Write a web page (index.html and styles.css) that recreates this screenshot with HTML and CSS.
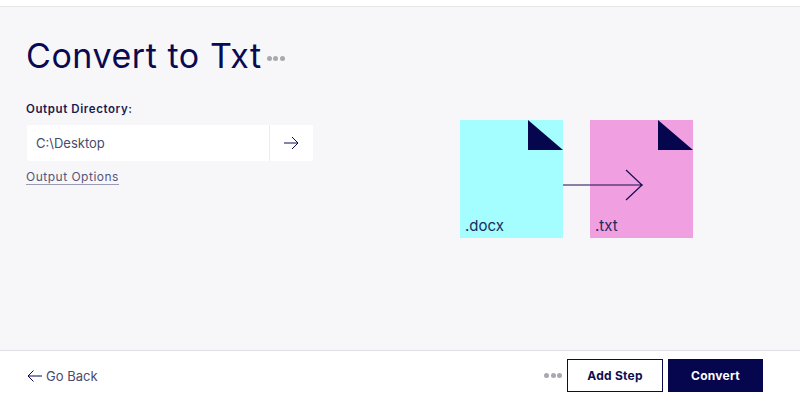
FILE: index.html
```html
<!DOCTYPE html>
<html lang="en">
<head>
<meta charset="utf-8">
<title>Convert to Txt</title>
<link rel="stylesheet" href="styles.css">
</head>
<body>
<div class="app">
  <main class="main">
    <section class="form">
      <div class="title-row">
        <h1 class="title">Convert to Txt</h1>
        <span class="dots"><i></i><i></i><i></i></span>
      </div>
      <label class="label">Output Directory:</label>
      <div class="field">
        <span class="field-value">C:\Desktop</span>
        <span class="field-btn">
          <svg width="16" height="14" viewBox="0 0 16 14" fill="none" stroke="#0a0a52" stroke-width="1"><path d="M1 7h14M9 1l6 6-6 6"/></svg>
        </span>
      </div>
      <a class="options">Output Options</a>
    </section>
    <section class="art">
      <div class="doc doc-a"><span class="fold"></span><span class="ext">.docx</span></div>
      <div class="doc doc-b"><span class="fold"></span><span class="ext">.txt</span></div>
      <svg class="art-arrow" width="82" height="32" viewBox="0 0 82 32" fill="none" stroke="#1a0a52" stroke-width="1.2"><path d="M0 16h80M63 1l16 15-16 15"/></svg>
    </section>
  </main>
  <footer class="footer">
    <a class="back">
      <svg width="15" height="12" viewBox="0 0 15 12" fill="none" stroke="#0a0a52" stroke-width="1"><path d="M15 6H1M6.500 .5L1 6l5.500 5.500"/></svg>
      Go Back
    </a>
    <div class="actions">
      <span class="dots"><i></i><i></i><i></i></span>
      <button class="btn btn-outline">Add Step</button>
      <button class="btn btn-solid">Convert</button>
    </div>
  </footer>
</div>
</body>
</html>
```
FILE: styles.css
```css
* { box-sizing: border-box; }
html, body { margin: 0; height: 100%; }
body { background: #fff; font-family: "Inter", "Liberation Sans", sans-serif; color: #0a0a52; }
.app { height: 400px; display: flex; flex-direction: column; padding-top: 6px; }
.main { height: 345px; background: #f7f7f9; border-top: 1px solid #e8e8ec; border-bottom: 1px solid #dfdfe5; display: flex; justify-content: space-between; }
.form { padding: 28px 0 0 26px; width: 314px; }
.title-row { display: flex; align-items: center; gap: 5px; height: 42px; }
.title { margin: 0; font-size: 34px; font-weight: 400; line-height: 42px; letter-spacing: 0.55px; color: #0a0a52; white-space: nowrap; }
.dots { display: inline-flex; gap: 1.500px; }
.dots i { width: 5px; height: 5px; border-radius: 50%; background: #a8a8ae; display: block; }
.title-row .dots { margin-top: 5px; }
.label { display: block; margin-top: 25px; font-size: 11.500px; font-weight: 600; letter-spacing: 0.6px; line-height: 14px; color: #1b1b52; }
.field { margin-top: 9px; height: 36px; width: 286px; margin-left: 1px; background: #fff; border-radius: 2px; display: flex; align-items: center; }
.field-value { flex: 1; padding-left: 9px; font-size: 13px; color: #4a4a6e; }
.field-btn { width: 44px; height: 100%; border-left: 1px solid #ececf0; display: flex; align-items: center; justify-content: center; padding-right: 1px; }
.options { display: inline-block; margin-top: 9px; font-size: 12px; letter-spacing: 0.5px; line-height: 14px; color: #55557a; border-bottom: 1px solid #9a9ab0; }
.art { position: relative; width: 340px; }
.doc { position: absolute; top: 113px; width: 103px; height: 118px; }
.doc-a { left: 0; background: #a4fdff; }
.doc-b { left: 130px; background: #f0a0e0; }
.fold { position: absolute; top: 0; right: 0; width: 35px; height: 30px; background: #06064f; clip-path: polygon(0 0, 100% 100%, 0 100%); }
.ext { position: absolute; left: 5px; bottom: 3px; font-size: 15px; line-height: 18px; color: #1a2a5e; }
.art-arrow { position: absolute; left: 103px; top: 162px; }
.footer { flex: 1; display: flex; align-items: center; justify-content: space-between; padding: 0 37px 0 27px; }
.back { display: flex; align-items: center; gap: 4px; font-size: 13px; color: #4a4a6e; }
.actions { display: flex; align-items: center; gap: 5px; }
.actions .dots { margin-right: 0; }
.btn { width: 96px; height: 33px; font-family: inherit; font-size: 12px; font-weight: 700; letter-spacing: 0.25px; padding: 0; border-radius: 0; }
.btn-outline { background: #fff; color: #0f0f4f; border: 1px solid #0a0a52; }
.btn-solid { width: 95px; background: #06064f; color: #fff; border: 0; }
```
